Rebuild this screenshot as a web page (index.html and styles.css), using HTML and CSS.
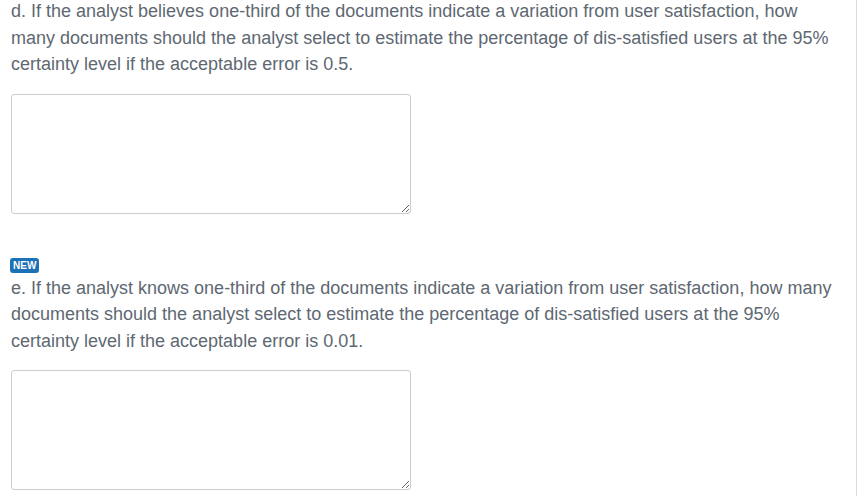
FILE: index.html
```html
<!DOCTYPE html>
<html>
<head>
<meta charset="utf-8">
<link rel="stylesheet" href="styles.css">
</head>
<body>
<div class="page">
  <div class="content">
    <section class="question">
      <p class="q-text">d. If the analyst believes one-third of the documents indicate a variation from user satisfaction, how many documents should the analyst select to estimate the percentage of dis-satisfied users at the 95% certainty level if the acceptable error is 0.5.</p>
      <textarea class="answer"></textarea>
    </section>
    <section class="question second">
      <span class="badge">NEW</span>
      <p class="q-text">e. If the analyst knows one-third of the documents indicate a variation from user satisfaction, how many documents should the analyst select to estimate the percentage of dis-satisfied users at the 95% certainty level if the acceptable error is 0.01.</p>
      <textarea class="answer"></textarea>
    </section>
  </div>
</div>
</body>
</html>
```
FILE: styles.css
```css
html, body {
  margin: 0;
  padding: 0;
  background: #fff;
}
.page {
  width: 856px;
  height: 496px;
  border-right: 1px solid #dcdcdc;
  overflow: hidden;
}
.content {
  padding: 0 12px 0 11px;
  display: flex;
  flex-direction: column;
}
.question {
  display: flex;
  flex-direction: column;
  align-items: flex-start;
}
.second {
  margin-top: 44px;
}
.q-text {
  margin: -2px 0 0 0;
  font-family: "Liberation Sans", Arial, sans-serif;
  font-size: 18px;
  line-height: 26.5px;
  color: #5e6872;
}
.second .q-text {
  margin-top: 2px;
}
.answer {
  margin-top: 16px;
  width: 400px;
  height: 120px;
  box-sizing: border-box;
  border: 1px solid #cccccc;
  border-radius: 3px;
  padding: 6px 8px;
  font-family: "Liberation Sans", Arial, sans-serif;
  font-size: 14px;
  resize: vertical;
  background: #fff;
}
.badge {
  display: inline-block;
  margin-left: -1px;
  background: #1b72b6;
  color: #fff;
  font-family: "Liberation Sans", Arial, sans-serif;
  font-weight: bold;
  font-size: 10px;
  line-height: 15px;
  height: 15px;
  padding: 0 3px;
  border-radius: 3px;
}
```
